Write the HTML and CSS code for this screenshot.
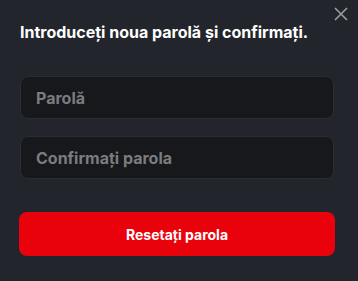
FILE: index.html
```html
<!DOCTYPE html>
<html lang="ro">
<head>
    <meta charset="UTF-8">
    <meta name="viewport" content="width=device-width, initial-scale=1.0">
    <title>Resetare parolă</title>
    <link rel="stylesheet" href="styles.css">
</head>
<body>
    <div class="reset-modal">
        <button class="close-btn" aria-label="Închide">
            <svg width="14" height="14" viewBox="0 0 14 14">
                <path d="M1 1 L13 13 M13 1 L1 13" stroke="#9b9da1" stroke-width="1.6" fill="none"/>
            </svg>
        </button>
        <h2>Introduceți noua parolă și confirmați.</h2>
        <form class="reset-form">
            <input type="password" class="field" placeholder="Parolă">
            <input type="password" class="field" placeholder="Confirmați parola">
            <button type="button" class="submit-btn">Resetați parola</button>
        </form>
    </div>
</body>
</html>
```

FILE: styles.css
```css
html, body {
    margin: 0;
    height: 100%;
    background-color: #22252b;
}

body {
    font-family: Inter, "Noto Sans", sans-serif;
}

.reset-modal {
    position: relative;
    padding: 22px 23px 0 19px;
}

.close-btn {
    position: absolute;
    top: 7px;
    right: 10px;
    padding: 0;
    border: none;
    background: none;
    cursor: pointer;
    line-height: 0;
}

h2 {
    margin: 0 0 34px 1px;
    color: #ffffff;
    font-size: 16px;
    font-weight: 700;
    line-height: 20px;
}

.reset-form {
    display: flex;
    flex-direction: column;
}

.field {
    box-sizing: border-box;
    height: 43px;
    margin: 0 1px 17px 1px;
    padding: 0 15px;
    border: 1px solid #2b2d32;
    border-radius: 8px;
    background-color: #17181b;
    color: #ffffff;
    font-family: inherit;
    font-size: 16px;
    font-weight: 700;
    outline: none;
}

.field::placeholder {
    color: #7b7c80;
}

.field + .submit-btn {
    margin-top: 16px;
}

.submit-btn {
    height: 44px;
    border: none;
    border-radius: 8px;
    background-color: #e9020c;
    color: #ffffff;
    font-family: inherit;
    font-size: 14px;
    font-weight: 700;
    cursor: pointer;
}
```
